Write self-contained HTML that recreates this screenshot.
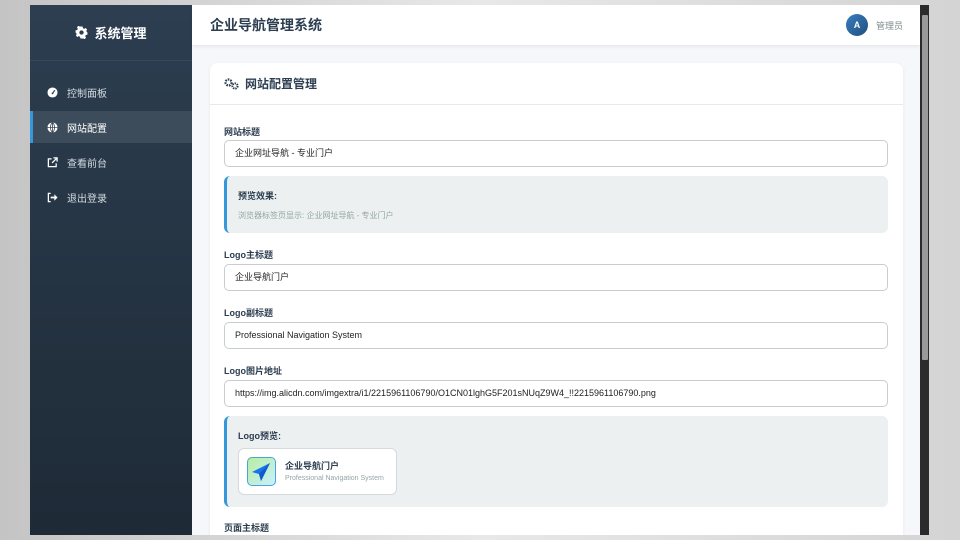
<!DOCTYPE html><html><head><meta charset="utf-8"><style>
*{box-sizing:border-box;margin:0;padding:0}
body{width:960px;height:540px;overflow:hidden;background:linear-gradient(90deg,#c4c4c4,#e8e8e8 50%,#d4d4d4);font-family:"Liberation Sans","Noto Sans CJK SC",sans-serif;position:relative}
.app{position:absolute;left:30px;top:5px;width:890px;height:530px;background:#f5f7fa;overflow:hidden}
.side{position:absolute;left:0;top:0;width:162px;height:530px;background:linear-gradient(180deg,#2c3e50,#1e2a36)}
.logo{height:56px;border-bottom:1px solid #34495e;color:#fff;font-size:13px;font-weight:bold;display:flex;align-items:center;justify-content:center;gap:6px}
.nav{margin-top:15px}
.nav div{height:32px;margin-bottom:3px;display:flex;align-items:center;padding-left:17px;color:#d5dbe1;font-size:10px;gap:9px}
.nav div.act{background:#3d4c5b;border-left:3px solid #3498db;padding-left:14px;color:#fff}
.nav svg{width:11px;height:11px}
.head{position:absolute;left:162px;top:0;right:0;height:40px;background:#fff;box-shadow:0 2px 4px rgba(0,0,0,.06);display:flex;align-items:center;padding-left:18px}
.head h1{font-size:14px;color:#2c3e50}
.av{position:absolute;right:52px;top:9px;width:22px;height:22px;border-radius:50%;background:linear-gradient(135deg,#3a7ebf,#1f4f7f);color:#fff;font-size:9px;font-weight:bold;text-align:center;line-height:22px}
.un{position:absolute;right:17px;top:14px;font-size:9px;color:#7f8c8d}
.card{position:absolute;left:180px;top:58px;width:693px;height:500px;background:#fff;border-radius:8px;box-shadow:0 1px 4px rgba(0,0,0,.06)}
.ch{height:42px;border-bottom:1px solid #e6e9ed;display:flex;align-items:center;padding-left:14px;font-size:12px;font-weight:bold;color:#2c3e50;gap:6px}
.lb{position:absolute;left:14px;font-size:9px;font-weight:bold;color:#2c3e50}
.in{position:absolute;left:14px;width:664px;height:27px;border:1px solid #c8cdd2;border-radius:5px;font-size:9px;color:#222;padding-left:10px;line-height:25px}
.pv{position:absolute;left:14px;width:664px;background:#ecf0f1;border-left:3px solid #3498db;border-radius:6px}
.sb{position:absolute;left:920px;top:5px;width:9px;height:530px;background:#2b2b2b}
.th{position:absolute;left:922px;top:15px;width:6px;height:345px;background:#9a9a9a;border-radius:1px}
</style></head><body>
<div class="app">
<div class="side">
<div class="logo"><svg width="13" height="13" viewBox="0 0 24 24"><path fill="#fff" d="M12 8a4 4 0 100 8 4 4 0 000-8zM10 1h4l.6 3 2.4 1.2 2.6-1.6 2.8 2.8-1.6 2.6L22 11.4l1 .6v4l-3 .6-1.2 2.4 1.6 2.6-2.8 2.8-2.6-1.6-2.4 1.2L14 23h-4l-.6-3L7 18.8l-2.6 1.6-2.8-2.8 1.6-2.6L2 12.6 1 12V8l3-.6L5.2 5 3.6 2.4 6.4-.4 9 1.2z" fill-rule="evenodd"/></svg>系统管理</div>
<div class="nav">
<div><svg viewBox="0 0 12 12"><circle cx="6" cy="6" r="5.5" fill="#fff"/><path d="M6 7L8.5 3.5" stroke="#2c3e50" stroke-width="1.3"/><circle cx="6" cy="7" r="1" fill="#2c3e50"/></svg>控制面板</div>
<div class="act"><svg viewBox="0 0 12 12"><circle cx="6" cy="6" r="5.5" fill="#fff"/><path d="M6 .5v11M.5 6h11M6 .5c-3 3-3 8 0 11M6 .5c3 3 3 8 0 11" stroke="#3d4c5b" fill="none" stroke-width=".9"/></svg>网站配置</div>
<div><svg viewBox="0 0 12 12"><path d="M5 2H1.5v8.5H10V7" stroke="#fff" stroke-width="1.4" fill="none"/><path d="M7 1h4v4M11 1L5.5 6.5" stroke="#fff" stroke-width="1.4" fill="none"/></svg>查看前台</div>
<div><svg viewBox="0 0 12 12"><path d="M4 1.5H1.5v9H4" stroke="#fff" stroke-width="1.4" fill="none"/><path d="M4 5h4V2.5L11.5 6 8 9.5V7H4z" fill="#fff"/></svg>退出登录</div>
</div></div>
<div class="head"><h1>企业导航管理系统</h1><div class="av">A</div><div class="un">管理员</div></div>
<div class="card">
<div class="ch"><svg width="15" height="12" viewBox="0 0 15 12"><circle cx="4.5" cy="4.5" r="3" fill="none" stroke="#2c3e50" stroke-width="2.2" stroke-dasharray="1.6 1"/><circle cx="11" cy="8" r="2.6" fill="none" stroke="#2c3e50" stroke-width="2" stroke-dasharray="1.4 0.9"/></svg>网站配置管理</div>
<div class="lb" style="top:62px">网站标题</div>
<div class="in" style="top:77px">企业网址导航 - 专业门户</div>
<div class="pv" style="top:113px;height:57px"><div style="position:absolute;left:11px;top:13px;font-size:9px;font-weight:bold;color:#2c3e50">预览效果:</div><div style="position:absolute;left:11px;top:34px;font-size:8px;color:#95a5a6">浏览器标签页显示: 企业网址导航 - 专业门户</div></div>
<div class="lb" style="top:185px">Logo主标题</div>
<div class="in" style="top:201px">企业导航门户</div>
<div class="lb" style="top:243px">Logo副标题</div>
<div class="in" style="top:259px">Professional Navigation System</div>
<div class="lb" style="top:301px">Logo图片地址</div>
<div class="in" style="top:317px">https://img.alicdn.com/imgextra/i1/2215961106790/O1CN01lghG5F201sNUqZ9W4_!!2215961106790.png</div>
<div class="pv" style="top:353px;height:91px"><div style="position:absolute;left:11px;top:13px;font-size:9px;font-weight:bold;color:#2c3e50">Logo预览:</div>
<div style="position:absolute;left:11px;top:32px;width:159px;height:47px;background:#fff;border:1px solid #d5dadf;border-radius:6px">
<div style="position:absolute;left:8px;top:8px;width:29px;height:29px;border-radius:5px;background:linear-gradient(135deg,#b8eea0,#c8f0ff);border:1px solid #4aa3df"><svg width="27" height="27" viewBox="0 0 27 27"><path d="M22 5 L4 14 L11 16 L13 23 Z" fill="#1a73e8"/><path d="M22 5 L11 16 L13 23Z" fill="#0d5bd0"/></svg></div>
<div style="position:absolute;left:46px;top:10px;font-size:9px;font-weight:bold;color:#2c3e50">企业导航门户</div>
<div style="position:absolute;left:46px;top:26px;font-size:7px;color:#95a5a6">Professional Navigation System</div></div></div>
<div class="lb" style="top:458px">页面主标题</div>
</div>
</div>
<div class="sb"></div><div class="th"></div>
</body></html>
